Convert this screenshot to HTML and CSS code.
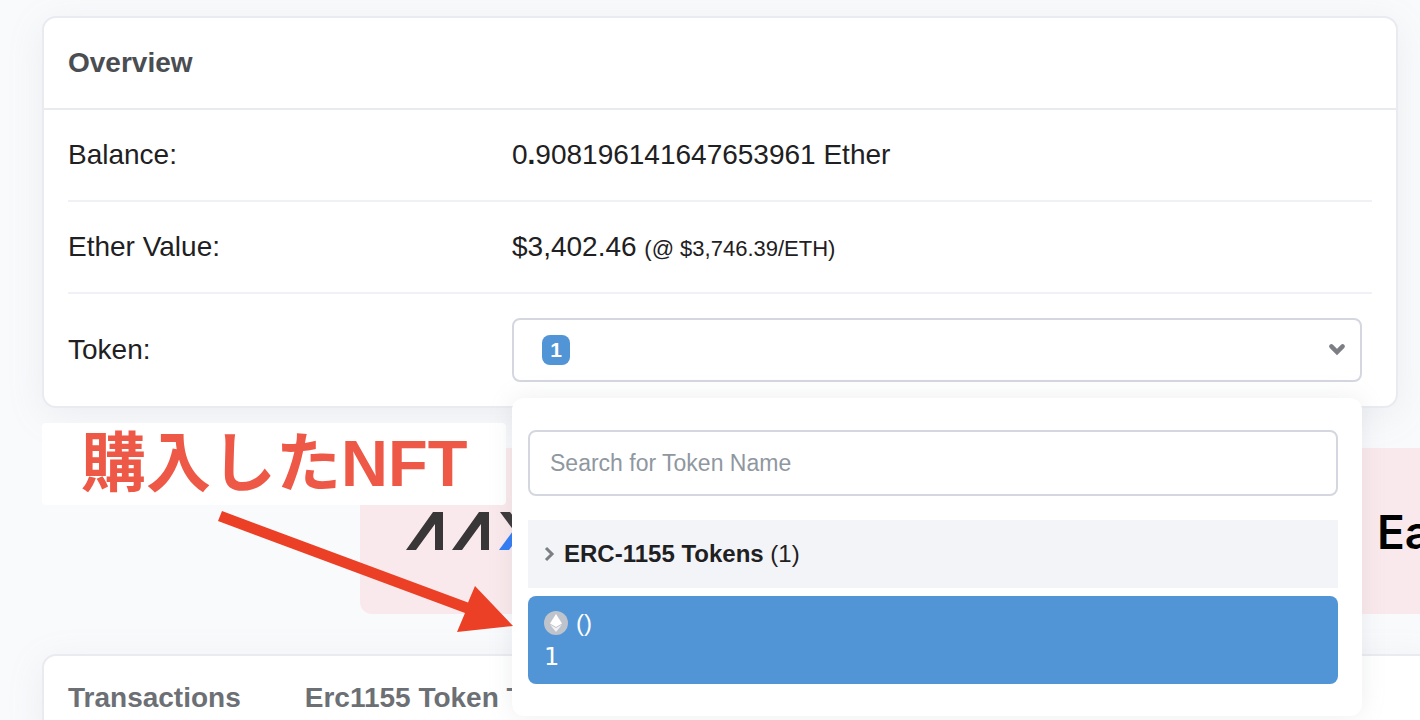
FILE: index.html
```
<!DOCTYPE html>
<html lang="ja">
<head>
  <meta charset="UTF-8">
  <meta name="viewport" content="width=device-width, initial-scale=1.0">
  <title>Overview</title>
  <link rel="stylesheet" href="styles.css">
</head>
<body>
  <main class="page">
    <section class="card overview">
      <h2 class="card-header">Overview</h2>
      <dl class="card-body">
        <div class="row">
          <dt>Balance:</dt>
          <dd>0<b>.</b>908196141647653961 Ether</dd>
        </div>
        <div class="row">
          <dt>Ether Value:</dt>
          <dd>$3,402.46 <span class="small">(@ $3,746.39/ETH)</span></dd>
        </div>
        <div class="row row-token">
          <dt id="token-label">Token:</dt>
          <dd class="token">
            <button class="token-toggle" type="button" aria-labelledby="token-label" aria-expanded="true">
              <span class="badge">1</span>
              <svg class="chevron-down" viewBox="0 0 16 12" aria-hidden="true"><path d="M3 3l5 5 5-5"/></svg>
            </button>
            <div class="token-menu">
              <input class="search" type="text" placeholder="Search for Token Name" aria-label="Search for Token Name">
              <div class="group">
                <svg class="chevron-right" viewBox="0 0 12 16" aria-hidden="true"><path d="M2 2l6 6-6 6"/></svg>
                <span><strong>ERC-1155 Tokens</strong> (1)</span>
              </div>
              <a class="token-item" href="#">
                <span class="token-name">
                  <svg class="token-icon" viewBox="0 0 24 24" aria-hidden="true">
                    <circle cx="12" cy="12" r="12" fill="#bfc3cb"/>
                    <path d="M12 3l6 9.500-6 3.500-6-3.500z" fill="#fff"/>
                    <path d="M6 13.500l6 3.500 6-3.500-6 7.500z" fill="#f1f2f5"/>
                  </svg>
                  ()
                </span>
                <span class="token-amount">1</span>
              </a>
            </div>
          </dd>
        </div>
      </dl>
    </section>

    <section class="promo">
      <a class="banner" href="#">
        <svg class="banner-logo" viewBox="0 0 150 40" role="img" aria-label="AAX">
          <g fill="#393637">
            <path d="M0 39L27 1h10v38h-8V13L10 39z"/>
            <path d="M46 39L73 1h10v38h-8V13L56 39z"/>
            <path d="M94 1h10l28 38h-10z"/>
          </g>
          <path d="M93 39l14-19 5 7-9 12z" fill="#2f7bf6"/>
        </svg>
        <span class="banner-text">Earn</span>
      </a>
      <p class="note">購入したNFT</p>
      <svg class="arrow" viewBox="0 0 296 122" aria-hidden="true">
        <path d="M4 0L250 91.500 257 75 295 115 239 121 247 102 0 10z" fill="#eb4026"/>
      </svg>
    </section>

    <section class="card transactions">
      <nav class="tabs">
        <a href="#">Transactions</a>
        <a href="#">Erc1155 Token Txns</a>
      </nav>
    </section>
  </main>
</body>
</html>
```
FILE: styles.css
```
* {
  box-sizing: border-box;
}

body {
  margin: 0;
  height: 100vh;
  overflow: hidden;
  background-color: #f9fafc;
  color: #1e2022;
  font-family: "Liberation Sans", "Noto Sans CJK JP", sans-serif;
  font-size: 28px;
  line-height: 42px;
}

a {
  color: inherit;
  text-decoration: none;
}

.page {
  padding: 16px 22px 0 42px;
}

.card {
  background-color: #fff;
  border: 2px solid #e9ebf0;
  border-radius: 14px;
  box-shadow: 0 8px 36px rgba(140, 152, 164, 0.13);
}

.overview {
  position: relative;
}

.card-header {
  margin: 0;
  padding: 24px;
  border-bottom: 2px solid #e9ebf0;
  color: #4a4d51;
  font-size: 28px;
}

.card-body {
  margin: 0;
  padding: 0 24px;
}

.row {
  display: grid;
  grid-template-columns: 1fr 2fr;
  column-gap: 14px;
  align-items: center;
  padding: 24px 0;
  border-bottom: 2px solid #f0f1f6;
}

.row-token {
  border-bottom: none;
}

.row dd {
  margin: 0;
}

.small {
  font-size: 22px;
  line-height: 22px;
}

.row .token {
  position: relative;
  margin-right: 10px;
}

.token-toggle {
  display: flex;
  justify-content: space-between;
  align-items: center;
  width: 100%;
  height: 64px;
  padding: 0 14px 0 28px;
  background-color: #fff;
  border: 2px solid #d5d7e0;
  border-radius: 8px;
  font-family: inherit;
  cursor: pointer;
}

.badge {
  width: 28px;
  background-color: #5295d6;
  border-radius: 8px;
  color: #fff;
  font-size: 21px;
  font-weight: bold;
  line-height: 30px;
  text-align: center;
}

.chevron-down,
.chevron-right {
  fill: none;
  stroke: #7b7e83;
}

.chevron-down {
  width: 18px;
  stroke-width: 4;
  stroke-linecap: round;
}

.chevron-right {
  width: 12px;
  height: 16px;
  stroke-width: 3;
}

.token-menu {
  position: absolute;
  top: calc(100% + 16px);
  left: 0;
  right: 0;
  z-index: 2;
  padding: 32px 24px 32px 16px;
  background-color: #fff;
  border-radius: 12px;
  box-shadow: 0 0 24px rgba(140, 152, 164, 0.16);
  font-size: 24px;
}

.search {
  display: block;
  width: 100%;
  height: 66px;
  padding: 0 20px;
  border: 2px solid #d5d7e0;
  border-radius: 8px;
  font-family: inherit;
  font-size: 23px;
}

.search::placeholder {
  color: #8f979f;
}

.group {
  display: flex;
  align-items: center;
  gap: 8px;
  height: 68px;
  margin: 24px 0 8px;
  padding: 0 16px;
  background-color: #f3f4f8;
}

.token-item {
  display: block;
  padding: 9px 16px;
  background-color: #5295d6;
  border-radius: 8px;
  color: #fff;
  line-height: 35px;
}

.token-name {
  display: flex;
  align-items: center;
  gap: 8px;
}

.token-icon {
  width: 24px;
  height: 24px;
}

.token-amount {
  display: block;
  font-family: "DejaVu Sans", sans-serif;
  font-size: 24px;
}

.promo {
  position: relative;
  margin: 40px -22px 40px 0;
}

.banner {
  display: flex;
  justify-content: space-between;
  height: 166px;
  margin-left: 318px;
  padding: 63px 0 0 46px;
  overflow: hidden;
  background-color: #fae9ec;
  border-radius: 12px 0 0 12px;
}

.banner-logo {
  width: 150px;
  height: 40px;
}

/* the banner copy runs past the right edge of the window */
.banner-text {
  width: 43px;
  color: #000;
  font-family: Inter, sans-serif;
  font-size: 46px;
  font-weight: 600;
}

.note {
  position: absolute;
  top: -25px;
  left: 0;
  margin: 0;
  padding: 0 39px;
  background-color: #fff;
  border-radius: 4px;
  color: #ee5847;
  font-size: 65px;
  font-weight: bold;
  line-height: 82px;
}

.arrow {
  position: absolute;
  top: 63px;
  left: 176px;
  z-index: 3;
  width: 296px;
  height: 122px;
}

.transactions {
  margin-right: -40px;
}

.tabs {
  display: flex;
  gap: 64px;
  padding: 21px 24px;
  color: #6c7075;
  font-weight: bold;
}
```
